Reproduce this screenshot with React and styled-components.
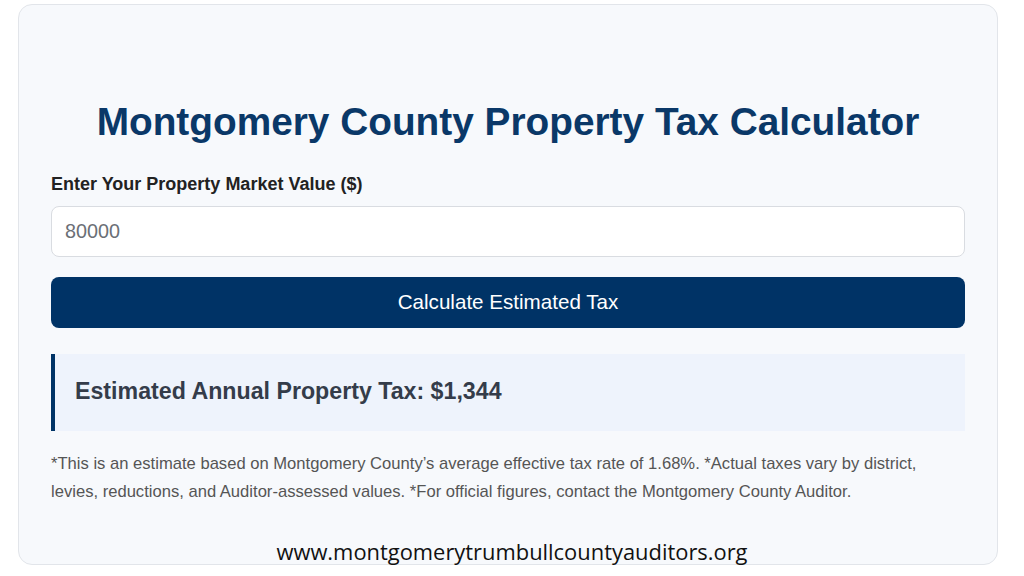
import React from "react";
import styled, { createGlobalStyle } from "styled-components";

const Global = createGlobalStyle`
  html, body { margin: 0; padding: 0; background: #ffffff; }
  body { font-family: "Liberation Sans", Arial, sans-serif; }
  * { box-sizing: border-box; }
`;

const Page = styled.div`
  position: relative;
  width: 1024px;
  height: 576px;
  padding: 4px 26px 11px 18px;
`;

const Card = styled.div`
  width: 980px;
  height: 561px;
  background: #f7f9fc;
  border: 1px solid #e2e5ea;
  border-radius: 14px;
  padding: 94px 32px 0 32px;
  display: flex;
  flex-direction: column;
`;

const Title = styled.h1`
  margin: 0 0 29px 0;
  font-size: 38.8px;
  line-height: 46px;
  font-weight: 700;
  color: #0a3868;
  text-align: center;
`;

const Label = styled.label`
  display: block;
  font-size: 18px;
  line-height: 21.6px;
  font-weight: 700;
  color: #222222;
  margin-bottom: 10px;
`;

const Input = styled.input`
  display: block;
  width: 100%;
  height: 51px;
  border: 1px solid #d9dce1;
  border-radius: 8px;
  background: #ffffff;
  padding: 0 13px;
  font-family: "Liberation Sans", Arial, sans-serif;
  font-size: 19.8px;
  color: #6b6f76;
  outline: none;
`;

const Button = styled.button`
  display: block;
  width: 100%;
  height: 51px;
  margin-top: 20px;
  border: none;
  border-radius: 8px;
  background: #003366;
  color: #ffffff;
  font-family: "Liberation Sans", Arial, sans-serif;
  font-size: 20.6px;
  cursor: pointer;
`;

const Result = styled.div`
  margin-top: 26px;
  height: 77px;
  background: #eef3fc;
  border-left: 4px solid #003366;
  padding: 24px 20px 0 20px;
  font-size: 23.2px;
  line-height: 27.6px;
  font-weight: 700;
  color: #343c4a;
`;

const Note = styled.p`
  margin: 19px 0 0 0;
  padding-right: 20px;
  font-size: 16.6px;
  line-height: 28px;
  color: #555555;
`;

const Watermark = styled.div`
  position: absolute;
  left: 0;
  right: 0;
  top: 536px;
  text-align: center;
  font-family: "Open Sans", sans-serif;
  font-size: 21.9px;
  line-height: 32px;
  color: #111111;
`;

export default function App() {
  return (
    <>
      <Global />
      <Page>
        <Card>
          <Title>Montgomery County Property Tax Calculator</Title>
          <Label htmlFor="value">Enter Your Property Market Value ($)</Label>
          <Input id="value" defaultValue="80000" />
          <Button>Calculate Estimated Tax</Button>
          <Result>Estimated Annual Property Tax: $1,344</Result>
          <Note>
            *This is an estimate based on Montgomery County’s average effective tax rate of 1.68%. *Actual taxes vary by district, levies, reductions, and Auditor-assessed values. *For official figures, contact the Montgomery County Auditor.
          </Note>
        </Card>
        <Watermark>www.montgomerytrumbullcountyauditors.org</Watermark>
      </Page>
    </>
  );
}
